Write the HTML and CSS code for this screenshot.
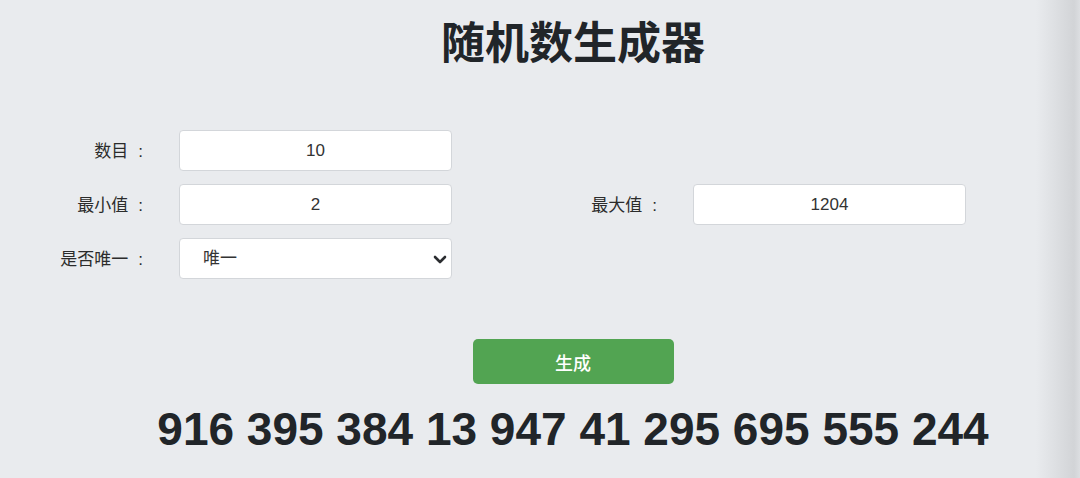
FILE: index.html
```html
<!DOCTYPE html>
<html lang="zh-CN">
<head>
  <meta charset="UTF-8">
  <meta name="viewport" content="width=device-width, initial-scale=1">
  <title>随机数生成器</title>
  <link rel="stylesheet" href="styles.css">
</head>
<body>
  <div class="page">
    <h1 class="title">随机数生成器</h1>

    <form class="form-grid" id="randForm">
      <label class="form-label" for="count">数目<span class="colon">:</span></label>
      <input class="form-input" id="count" type="text" value="10">

      <label class="form-label row-2" for="min">最小值<span class="colon">:</span></label>
      <input class="form-input row-2" id="min" type="text" value="2">
      <label class="form-label row-2 col-b" for="max">最大值<span class="colon">:</span></label>
      <input class="form-input row-2 col-b-input" id="max" type="text" value="1204">

      <label class="form-label row-3" for="unique">是否唯一<span class="colon">:</span></label>
      <div class="select-wrap row-3">
        <select class="form-select" id="unique">
          <option>唯一</option>
          <option>不唯一</option>
        </select>
        <svg class="select-arrow" width="14" height="9" viewBox="0 0 14 9">
          <path d="M2 2 L7 7 L12 2" fill="none" stroke="#2b2d30" stroke-width="2.6" stroke-linecap="round" stroke-linejoin="round"/>
        </svg>
      </div>
    </form>

    <div class="actions">
      <button class="btn-generate" type="button">生成</button>
      <p class="result" id="result">916 395 384 13 947 41 295 695 555 244</p>
    </div>
  </div>
</body>
</html>
```

FILE: styles.css
```css
html, body {
  height: 100%;
}

body {
  margin: 0;
  /* page background with the shadow of the window edge on the right */
  background: linear-gradient(to right, #e9ebee 0, #e9ebee 1036px, #d2d4d7 1074px, #dcdee1 1080px);
  font-family: "Noto Sans CJK SC", "Liberation Sans", sans-serif;
  color: #212529;
  overflow: hidden;
}

.page {
  padding-top: 10px;
}

.title {
  margin: 0 0 0 66px;
  text-align: center;
  font-size: 44px;
  line-height: 60px;
  font-weight: 700;
  color: #212529;
}

/* label | gap | input | gap | label | gap | input */
.form-grid {
  display: grid;
  grid-template-columns: 120px 27px 273px 94px 120px 27px 273px;
  grid-template-rows: 41px 41px 41px;
  row-gap: 13px;
  margin: 60px 0 0 32px;
}

.form-label {
  grid-column: 1;
  align-self: center;
  text-align: right;
  padding-right: 9px;
  font-size: 17px;
  line-height: 24px;
  color: #2b2b2b;
}

.colon {
  display: inline-block;
  margin-left: 10px;
  font-family: "Liberation Sans", sans-serif;
}

.form-input,
.select-wrap {
  grid-column: 3;
}

.row-2 { grid-row: 2; }
.row-3 { grid-row: 3; }

.col-b {
  grid-column: 5;
}

.col-b-input {
  grid-column: 7;
}

.form-input,
.form-select {
  box-sizing: border-box;
  width: 100%;
  height: 41px;
  border: 1px solid #d3d6da;
  border-radius: 4px;
  background-color: #ffffff;
  font-family: "Liberation Sans", "Noto Sans CJK SC", sans-serif;
  font-size: 17px;
  color: #333;
  outline: none;
}

.form-input {
  text-align: center;
  padding: 0 10px;
}

.select-wrap {
  position: relative;
}

.form-select {
  appearance: none;
  -webkit-appearance: none;
  padding: 0 0 0 23px;
}

.select-arrow {
  position: absolute;
  right: 5px;
  top: 17px;
  pointer-events: none;
}

.actions {
  margin-left: 66px;
  text-align: center;
}

.btn-generate {
  margin-top: 60px;
  width: 201px;
  height: 45px;
  border: none;
  border-radius: 5px;
  background-color: #52a452;
  color: #ffffff;
  font-family: "Noto Sans CJK SC", "Liberation Sans", sans-serif;
  font-size: 18px;
  font-weight: 500;
  cursor: pointer;
}

.btn-generate:hover {
  background-color: #479147;
}

.result {
  margin: 19px 0 0;
  font-family: "Liberation Sans", Arial, sans-serif;
  font-size: 46px;
  font-weight: 700;
  line-height: 52px;
  color: #212529;
}
```
